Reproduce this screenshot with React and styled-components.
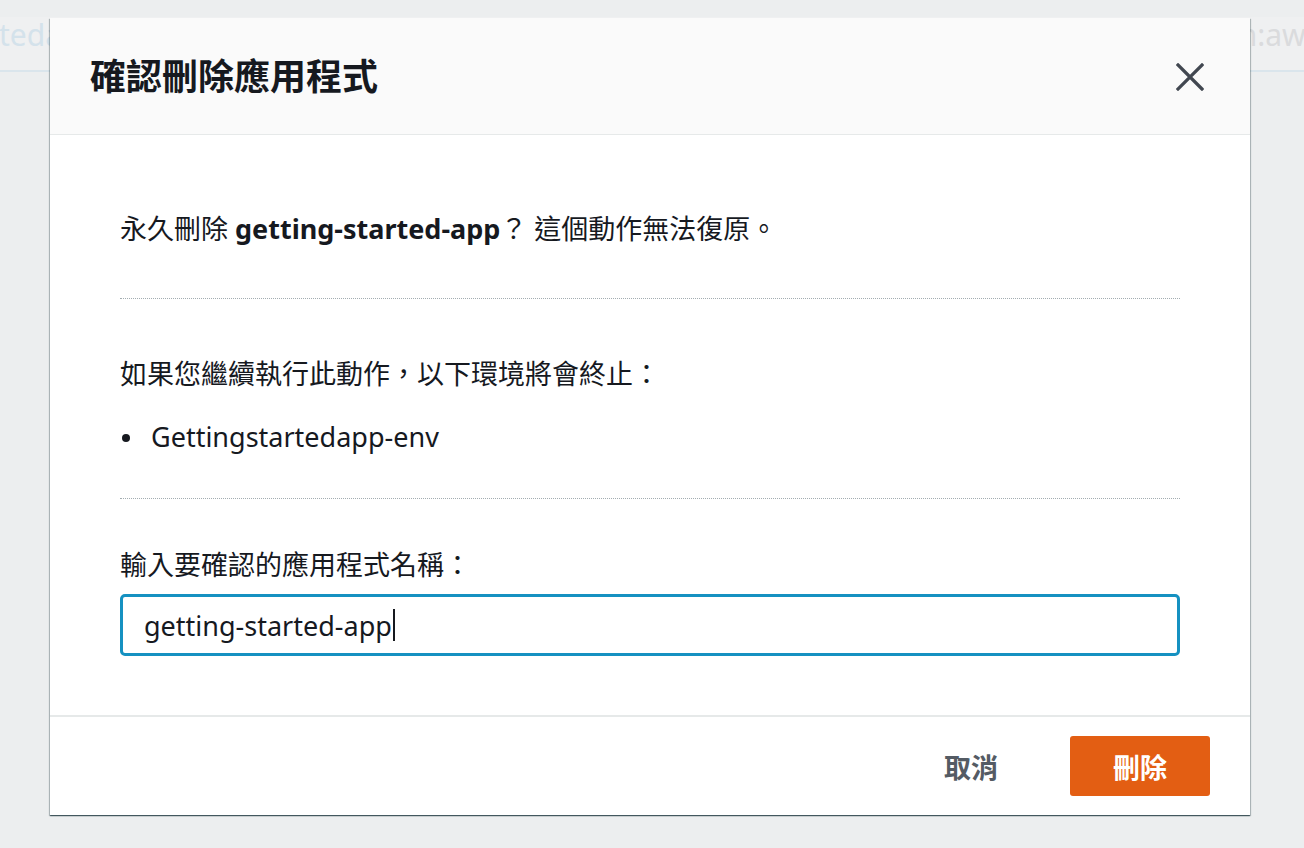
import React from 'react'
import styled, { createGlobalStyle } from 'styled-components'

const GlobalStyle = createGlobalStyle`
  html, body {
    margin: 0;
    padding: 0;
    background: #eceeef;
  }
  body {
    font-family: "Noto Sans", "Noto Sans CJK TC", sans-serif;
    color: #16191f;
  }
`

const CloseIcon = () => (
  <svg width="28" height="28" viewBox="0 0 28 28" fill="none">
    <path d="M2 2 L26 26 M26 2 L2 26" stroke="#414750" strokeWidth="3.2" strokeLinecap="square" />
  </svg>
)

const App = () => {
  return (
    <>
      <GlobalStyle />
      <Page>
        <TableRow>
          <FadedLink>teda</FadedLink>
          <div />
          <FadedText>arn:aws</FadedText>
        </TableRow>

        <Modal role="dialog" aria-modal="true">
          <Header>
            <Title>確認刪除應用程式</Title>
            <CloseButton aria-label="關閉">
              <CloseIcon />
            </CloseButton>
          </Header>

          <Body>
            <Text>
              永久刪除 <strong>getting-started-app</strong>？ 這個動作無法復原。
            </Text>
            <Divider $top={51} $bottom={57} />

            <Text>如果您繼續執行此動作，以下環境將會終止：</Text>
            <EnvList>
              <EnvItem>Gettingstartedapp-env</EnvItem>
            </EnvList>
            <Divider $top={43} $bottom={48} />

            <Label>輸入要確認的應用程式名稱：</Label>
            <InputBox>
              <span>getting-started-app</span>
              <Caret />
            </InputBox>
          </Body>

          <Footer>
            <CancelButton>取消</CancelButton>
            <DeleteButton>刪除</DeleteButton>
          </Footer>
        </Modal>
      </Page>
    </>
  )
}

const Page = styled.div`
  position: relative;
  width: 100%;
  height: 848px;
  overflow: hidden;
  background: #eceeef;
  padding-top: 17px;
  box-sizing: border-box;
`

const TableRow = styled.div`
  display: grid;
  grid-template-columns: auto 1fr auto;
  align-items: start;
  height: 55px;
  background: #eff0f1;
  border-bottom: 2px solid #dae5ec;
  box-sizing: border-box;
`

const FadedLink = styled.span`
  font-size: 30px;
  line-height: 36px;
  white-space: nowrap;
  color: #d4e2eb;
  margin-left: -1px;
`

const FadedText = styled.span`
  font-size: 30px;
  line-height: 36px;
  white-space: nowrap;
  color: #dadbdd;
  margin-right: -16px;
`

const Modal = styled.div`
  position: absolute;
  left: 50px;
  top: 18px;
  width: 1200px;
  height: 797px;
  display: flex;
  flex-direction: column;
  background: #fff;
  box-shadow: 0 1px 1px 0 rgba(0, 28, 36, 0.55), 1px 1px 1px 0 rgba(0, 28, 36, 0.2),
    -1px 1px 1px 0 rgba(0, 28, 36, 0.2);
`

const Header = styled.div`
  display: flex;
  align-items: center;
  justify-content: space-between;
  height: 117px;
  box-sizing: border-box;
  padding: 2px 43px 0 40px;
  background: #fafafa;
  border-bottom: 1px solid #e6e9e9;
`

const Title = styled.h2`
  margin: 0;
  font-size: 36px;
  font-weight: 700;
  color: #16191f;
  line-height: 1.3;
`

const CloseButton = styled.button`
  display: flex;
  align-items: center;
  justify-content: center;
  width: 34px;
  height: 34px;
  padding: 0;
  border: none;
  background: transparent;
  cursor: pointer;
`

const Body = styled.div`
  flex: 1;
  padding: 76px 70px 0;
  border-bottom: 2px solid #e6e9e9;
`

const Text = styled.p`
  margin: 0;
  font-size: 27px;
  line-height: 36px;
  color: #16191f;

  strong {
    font-weight: 700;
  }
`

const Divider = styled.hr`
  margin: ${p => p.$top}px 0 ${p => p.$bottom}px;
  border: none;
  border-top: 1px dotted #a3adb1;
  height: 0;
`

const EnvList = styled.ul`
  list-style: none;
  margin: 27px 0 0;
  padding: 0;
`

const EnvItem = styled.li`
  display: flex;
  align-items: center;
  font-size: 27px;
  line-height: 36px;
  padding-left: 31px;
  position: relative;

  &::before {
    content: '';
    position: absolute;
    left: 2px;
    top: 15px;
    width: 8px;
    height: 8px;
    border-radius: 50%;
    background: #16191f;
  }
`

const Label = styled.div`
  font-size: 27px;
  line-height: 36px;
  color: #16191f;
`

const InputBox = styled.div`
  display: flex;
  align-items: center;
  margin-top: 11px;
  height: 62px;
  box-sizing: border-box;
  padding: 0 21px;
  border: 3px solid #1591c1;
  border-radius: 5px;
  font-size: 27px;
  color: #16191f;
`

const Caret = styled.span`
  display: inline-block;
  width: 2px;
  height: 32px;
  margin-left: 1px;
  background: #16191f;
`

const Footer = styled.div`
  display: flex;
  align-items: center;
  justify-content: flex-end;
  gap: 52px;
  height: 98px;
  padding: 0 40px;
`

const CancelButton = styled.button`
  padding: 0 20px;
  height: 60px;
  border: none;
  background: transparent;
  font-family: inherit;
  font-size: 27px;
  font-weight: 700;
  color: #545b64;
  cursor: pointer;
`

const DeleteButton = styled.button`
  width: 140px;
  height: 60px;
  border: none;
  border-radius: 3px;
  background: #e35e13;
  font-family: inherit;
  font-size: 27px;
  font-weight: 700;
  color: #fff;
  cursor: pointer;
`

export default App
